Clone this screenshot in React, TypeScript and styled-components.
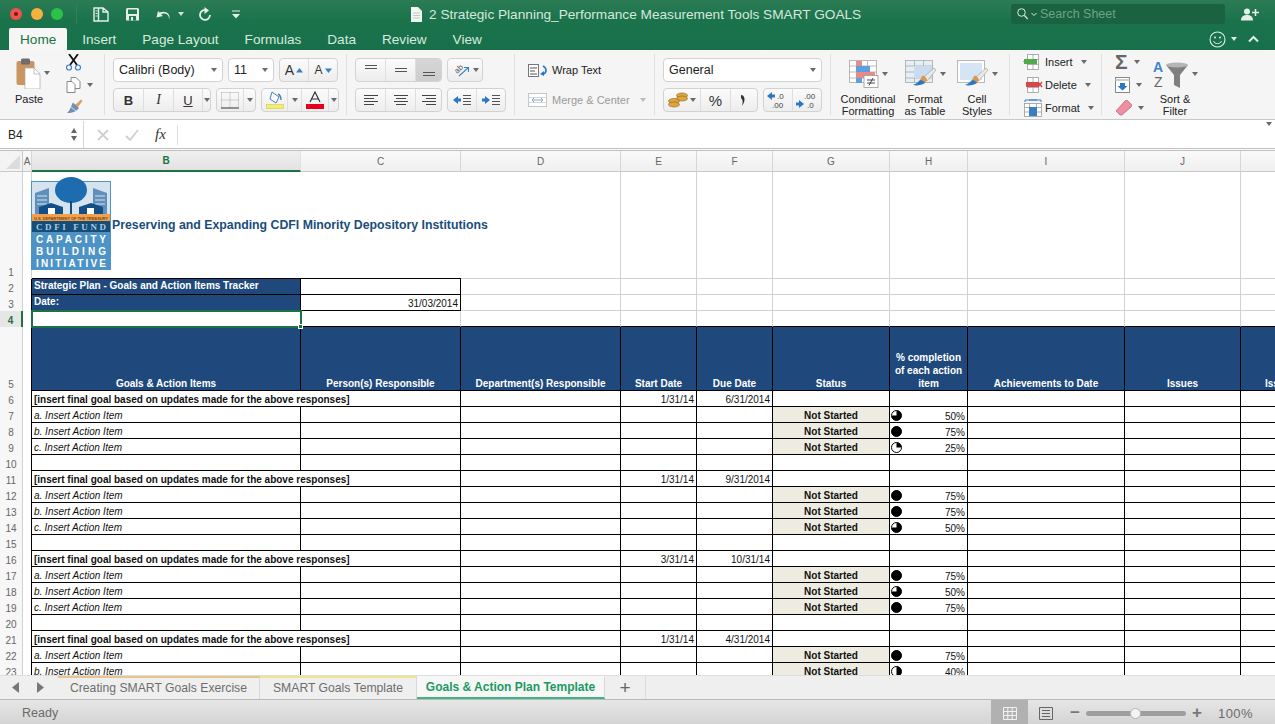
import styled, { createGlobalStyle } from 'styled-components'
import type { ReactNode } from 'react'

const GREEN = '#1e7145'
const NAVY = '#1f497d'
const INK = '#000'
const GRIDLINE = '#d2d2d2'

const Global = createGlobalStyle`
  html, body { margin: 0; padding: 0; height: 100%; overflow: hidden; }
  body { font-family: "Liberation Sans", Arial, sans-serif; color: #222; }
  #root { height: 100%; }
`

const Window = styled.div`
  display: flex;
  flex-direction: column;
  width: 1275px;
  height: 724px;
  overflow: hidden;
  background: #fff;
`

const Header = styled.header`
  flex: none;
  height: 50px;
  background: linear-gradient(#2c7c55, #1b734c 40%, #17704a);
`

const TitleRow = styled.div`
  display: flex;
  align-items: center;
  height: 28px;
`

const Lights = styled.div`
  display: flex;
  align-items: center;
  gap: 8.5px;
  flex: none;
  width: 77px;
  padding-left: 10px;
  box-sizing: border-box;
  border-right: 1px solid #2f8159;
  height: 20px;
`

const Light = styled.span<{ $color: string; $dot?: boolean }>`
  position: relative;
  width: 12px;
  height: 12px;
  border-radius: 50%;
  background: ${({ $color }) => $color};

  &::after {
    content: '';
    display: ${({ $dot }) => ($dot ? 'block' : 'none')};
    position: absolute;
    inset: 4px;
    border-radius: 50%;
    background: #7d1512;
  }
`

const QuickBar = styled.div`
  display: grid;
  grid-template-columns: 32px 30px 43px 33px 12px;
  align-items: center;
  flex: none;
  width: 318px;
  margin-left: 16px;
`

const QuickItem = styled.span`
  display: flex;
  align-items: center;
  gap: 7px;
`

const DocTitle = styled.div`
  flex: 1;
  display: flex;
  align-items: center;
  gap: 7px;
  font-size: 13.65px;
  color: #d5e8dd;
  white-space: nowrap;
`

const Search = styled.div`
  display: flex;
  align-items: center;
  gap: 3px;
  flex: none;
  width: 214px;
  height: 20px;
  margin-right: 16px;
  padding-left: 6px;
  box-sizing: border-box;
  border-radius: 3px;
  background: #1b6240;
  font-size: 12.5px;
  color: #6ba487;
`

const PersonSlot = styled.span`
  display: flex;
  flex: none;
  width: 34px;
`

const TabRow = styled.nav`
  display: flex;
  align-items: stretch;
  gap: 26px;
  height: 22px;
  padding-left: 9px;
  font-size: 13.6px;
`

const RibbonTab = styled.span<{ $active?: boolean }>`
  display: flex;
  align-items: center;
  color: ${({ $active }) => ($active ? GREEN : '#d8eadf')};
  background: ${({ $active }) => ($active ? '#f6f6f6' : 'transparent')};
  padding: ${({ $active }) => ($active ? '0 11px' : '0')};
  margin-right: ${({ $active }) => ($active ? '-11px' : '0')};
  border-radius: 2px 2px 0 0;
`

const HeaderEnd = styled.div`
  display: flex;
  align-items: center;
  gap: 5px;
  margin-left: auto;
  padding-right: 11px;
`

const Ribbon = styled.section`
  flex: none;
  display: flex;
  height: 70px;
  box-sizing: border-box;
  padding: 4px 0;
  background: #f5f5f5;
  border-bottom: 1px solid #c9c9c9;
  font-size: 11px;
  color: #222;
`

const Group = styled.div<{ $w: number; $pad?: number; $last?: boolean }>`
  display: flex;
  flex: none;
  box-sizing: border-box;
  width: ${({ $w }) => $w}px;
  padding-left: ${({ $pad }) => $pad ?? 8}px;
  border-right: ${({ $last }) => ($last ? 'none' : '1px solid #e0e0e0')};
`

const Stack = styled.div`
  display: flex;
  flex-direction: column;
  gap: 6px;
  padding-top: 4px;
`

const Row = styled.div<{ $gap?: number }>`
  display: flex;
  align-items: center;
  gap: ${({ $gap }) => $gap ?? 5}px;
  height: 24px;
`

const Seg = styled.div<{ $w: number }>`
  display: flex;
  flex: none;
  width: ${({ $w }) => $w}px;
  height: 24px;
  box-sizing: border-box;
  overflow: hidden;
  border: 1px solid #d2d2d2;
  border-radius: 4px;
  background: linear-gradient(#fbfbfb, #ededed);
`

const SegCell = styled.span<{ $grow?: boolean; $w?: number; $on?: boolean }>`
  display: flex;
  align-items: center;
  justify-content: center;
  gap: 2px;
  flex: ${({ $grow }) => ($grow ? 1 : 'none')};
  width: ${({ $w }) => ($w ? `${$w}px` : 'auto')};
  background: ${({ $on }) => ($on ? 'linear-gradient(#d6d6d6, #cdcdcd)' : 'transparent')};

  & + & {
    border-left: 1px solid #dedede;
  }
`

const Select = styled.div<{ $w: number }>`
  display: flex;
  align-items: center;
  justify-content: space-between;
  flex: none;
  width: ${({ $w }) => $w}px;
  height: 24px;
  box-sizing: border-box;
  padding: 0 5px;
  background: #fff;
  border: 1px solid #d2d2d2;
  border-radius: 4px;
  font-size: 12.5px;
  color: #222;
`

const Caret = styled.span<{ $tone?: string }>`
  flex: none;
  width: 0;
  height: 0;
  border-left: 3px solid transparent;
  border-right: 3px solid transparent;
  border-top: 4px solid ${({ $tone }) => $tone ?? '#6a6a6a'};
`

const PasteBlock = styled.div`
  display: flex;
  flex-direction: column;
  align-items: center;
  flex: none;
  width: 46px;
  padding-top: 3px;
  gap: 4px;
  margin-left: -2px;
`

const PasteIcon = styled.div`
  display: flex;
  align-items: center;
  gap: 3px;
  margin-left: 8px;
  height: 32px;
`

const ToolColumn = styled.div`
  display: flex;
  flex-direction: column;
  justify-content: space-between;
  margin-left: 14px;
  padding: 0 0 1px;
`

const ToolRow = styled.span`
  display: flex;
  align-items: center;
  gap: 6px;
`

const FaceText = styled.span<{ $bold?: boolean; $italic?: boolean; $under?: boolean; $serif?: boolean; $size?: number; $tone?: string }>`
  font-family: ${({ $serif }) => ($serif ? '"Liberation Serif", serif' : 'inherit')};
  font-weight: ${({ $bold }) => ($bold ? 700 : 400)};
  font-style: ${({ $italic }) => ($italic ? 'italic' : 'normal')};
  text-decoration: ${({ $under }) => ($under ? 'underline' : 'none')};
  font-size: ${({ $size }) => $size ?? 13}px;
  color: ${({ $tone }) => $tone ?? '#333'};
`

const SigmaGlyph = styled(FaceText)`
  line-height: 16px;
`

const WrapRow = styled.div<{ $off?: boolean }>`
  display: flex;
  align-items: center;
  gap: 4px;
  height: 24px;
  color: ${({ $off }) => ($off ? '#9a9a9a' : '#222')};
`

const BigButton = styled.div<{ $w: number }>`
  display: flex;
  flex-direction: column;
  align-items: center;
  flex: none;
  width: ${({ $w }) => $w}px;
  padding-top: 3px;
  line-height: 12px;
  text-align: center;
  white-space: nowrap;
`

const BigIcon = styled.div`
  display: flex;
  align-items: center;
  gap: 3px;
  flex: none;
  height: 34px;
  margin-bottom: 2px;
`

const CellsColumn = styled.div`
  display: flex;
  flex-direction: column;
  gap: 3px;
  margin-top: -2px;
`

const CellsRow = styled.div`
  display: flex;
  align-items: center;
  flex: none;
  gap: 2px;
  height: 20px;
  font-size: 11px;
`

const CellsCaret = styled(Caret)`
  margin-left: 6px;
`

const EditColumn = styled.div`
  display: flex;
  flex-direction: column;
  justify-content: space-between;
  flex: none;
  width: 36px;
  height: 62px;
`

const FormulaBar = styled.div`
  flex: none;
  display: flex;
  align-items: center;
  height: 31px;
  padding-top: 1px;
  box-sizing: border-box;
  background: #fff;
  border-bottom: 3px double #bdbdbd;
`

const NameBox = styled.div`
  display: flex;
  align-items: center;
  justify-content: space-between;
  flex: none;
  width: 84px;
  height: 100%;
  box-sizing: border-box;
  padding: 0 6px 0 8px;
  border-right: 1px solid #d6d6d6;
  font-size: 12px;
`

const Stepper = styled.span`
  display: flex;
  flex-direction: column;
  gap: 3px;
`

const StepUp = styled.span`
  width: 0;
  height: 0;
  border-left: 3.5px solid transparent;
  border-right: 3.5px solid transparent;
  border-bottom: 5px solid #666;
`

const StepDown = styled(StepUp)`
  transform: rotate(180deg);
`

const FormulaTools = styled.div`
  display: flex;
  align-items: center;
  gap: 16px;
  padding-left: 13px;
  width: 94px;
  height: 20px;
  box-sizing: border-box;
  border-right: 1px solid #dedede;
`

const FormulaEnd = styled.div`
  margin-left: auto;
  padding-right: 3px;
`

const SheetArea = styled.main`
  flex: 1;
  min-height: 0;
  overflow: hidden;
  background: #fff;
`

const Sheet = styled.table`
  table-layout: fixed;
  border-collapse: separate;
  border-spacing: 0;
  width: 1321px;
  font-size: 10px;
  color: #111;
`

const ColHead = styled.th<{ $on?: boolean }>`
  height: 21px;
  box-sizing: border-box;
  padding: 0;
  font-weight: ${({ $on }) => ($on ? 700 : 400)};
  font-size: 10px;
  color: ${({ $on }) => ($on ? GREEN : '#666')};
  background: ${({ $on }) => ($on ? 'linear-gradient(#f0f0f0, #e2e2e2)' : 'linear-gradient(#fafafa, #efefef)')};
  border-right: 1px solid ${({ $on }) => ($on ? '#e2e2e2' : '#d6d6d6')};
  border-bottom: ${({ $on }) => ($on ? `2px solid ${GREEN}` : '1px solid #c9c9c9')};
`

const Corner = styled.th`
  position: relative;
  padding: 0;
  background: #f4f4f4;
  border-right: 1px solid #c9c9c9;
  border-bottom: 1px solid #c9c9c9;

  &::after {
    content: '';
    position: absolute;
    right: 2px;
    bottom: 2px;
    border-left: 14px solid transparent;
    border-bottom: 14px solid #dcdcdc;
  }
`

const RowHead = styled.th<{ $on?: boolean }>`
  padding: 0 0 1px;
  box-sizing: border-box;
  vertical-align: bottom;
  font-size: 10px;
  line-height: 11px;
  font-weight: ${({ $on }) => ($on ? 700 : 400)};
  color: ${({ $on }) => ($on ? GREEN : '#666')};
  background: ${({ $on }) => ($on ? '#e6e6e6' : '#f7f7f7')};
  border-right: ${({ $on }) => ($on ? `2px solid ${GREEN}` : '1px solid #cfcfcf')};
`

type Edge = 'grid' | 'ink' | 'none'
const edge = (e: Edge = 'grid') =>
  e === 'none' ? 'none' : `1px solid ${e === 'ink' ? INK : GRIDLINE}`

const Cell = styled.td<{
  $h?: number
  $right?: Edge
  $under?: Edge
  $side?: 'left' | 'center' | 'right'
  $tone?: 'navy' | 'status'
  $bold?: boolean
  $italic?: boolean
}>`
  position: relative;
  box-sizing: border-box;
  height: ${({ $h }) => $h ?? 16}px;
  padding: ${({ $tone }) => ($tone === 'navy' ? '0 2px 2px' : '1px 2px 0')};
  line-height: 11px;
  white-space: nowrap;
  overflow: visible;
  text-align: ${({ $side }) => $side ?? 'left'};
  font-weight: ${({ $bold }) => ($bold ? 700 : 400)};
  font-style: ${({ $italic }) => ($italic ? 'italic' : 'normal')};
  color: ${({ $tone }) => ($tone === 'navy' ? '#fff' : '#111')};
  background: ${({ $tone }) => ($tone === 'navy' ? NAVY : $tone === 'status' ? '#eeece1' : 'transparent')};
  border-right: ${({ $right }) => edge($right)};
  border-bottom: ${({ $under }) => edge($under)};
`

const GapCell = styled(Cell)`
  padding: 0;
  background: #fff;
  border-bottom: none;
`

const BannerCell = styled(Cell)`
  padding: 0 0 0 80px;
  font-size: 12.3px;
  font-weight: 700;
  color: #1a4d7c;
`

const HeaderCell = styled(Cell)`
  vertical-align: bottom;
  padding: 0 2px;
  line-height: 13px;
  white-space: normal;
  text-align: center;
  font-weight: 700;
  color: #fff;
  background: ${NAVY};
  border-right: 1px solid ${INK};
  border-bottom: 1px solid ${INK};
`

const NoWrapLabel = styled.span`
  white-space: nowrap;
`

const SelectedCell = styled(Cell)`
  z-index: 2;
  outline: 2px solid ${GREEN};
  outline-offset: -1px;

  &::after {
    content: '';
    position: absolute;
    right: -3px;
    bottom: -3px;
    width: 5px;
    height: 5px;
    background: ${GREEN};
    border: 1px solid #fff;
    box-sizing: border-box;
  }
`

const Logo = styled.svg`
  position: absolute;
  left: -1px;
  top: 5px;
  z-index: 1;
`

const PctLine = styled.div`
  display: flex;
  align-items: center;
  justify-content: space-between;
  margin-left: -1px;
  margin-right: 0;
`

const PctText = styled.span`
  padding-top: 2px;
`

const SheetTabs = styled.div`
  flex: none;
  display: flex;
  align-items: stretch;
  height: 25px;
  box-sizing: border-box;
  background: #efefef;
  border-top: 1px solid #dedede;
  border-bottom: 1px solid #b9b9b9;
  font-size: 12.2px;
`

const TabArrows = styled.div`
  display: flex;
  align-items: center;
  gap: 16px;
  flex: none;
  width: 58px;
  padding-left: 12px;
  box-sizing: border-box;
`

const SheetTab = styled.div<{ $w: number; $strip?: string; $active?: boolean }>`
  display: flex;
  align-items: center;
  justify-content: center;
  flex: none;
  width: ${({ $w }) => $w}px;
  box-sizing: border-box;
  padding-bottom: 2px;
  font-size: ${({ $active }) => ($active ? '12px' : 'inherit')};
  color: ${({ $active }) => ($active ? '#1b9a63' : '#6e6e6e')};
  font-weight: ${({ $active }) => ($active ? 700 : 400)};
  border-top: 2px solid ${({ $strip }) => $strip ?? 'transparent'};
  border-right: 1px solid #d8d8d8;
  border-bottom: ${({ $active }) => ($active ? '2px solid #3fb585' : 'none')};
  background: ${({ $active }) => ($active ? '#f7f7f7' : 'transparent')};
`

const AddSheet = styled.div`
  display: flex;
  align-items: center;
  justify-content: center;
  flex: none;
  width: 40px;
  font-size: 19px;
  color: #666;
  border-right: 1px solid #dcdcdc;
`

const StatusBar = styled.footer`
  flex: none;
  display: flex;
  align-items: center;
  height: 24px;
  padding-left: 22px;
  background: linear-gradient(#e6e6e6, #d4d4d4);
  font-size: 12.5px;
  color: #6a6a6a;
`

const StatusLabel = styled.span`
  padding-top: 2px;
`

const StatusEnd = styled.div`
  display: flex;
  align-items: center;
  height: 100%;
  box-sizing: border-box;
  margin-left: auto;
  padding-top: 2px;
`

const ViewButton = styled.span<{ $on?: boolean; $w: number }>`
  display: flex;
  align-items: center;
  justify-content: center;
  align-self: stretch;
  margin-top: -2px;
  padding-top: 2px;
  width: ${({ $w }) => $w}px;
  background: ${({ $on }) => ($on ? '#b1b1b1' : 'transparent')};
`

const ZoomSign = styled.span`
  width: 22px;
  text-align: center;
  font-size: 17px;
  font-weight: 700;
  color: #777;
`

const Track = styled.span`
  position: relative;
  width: 100px;
  height: 5px;
  border-radius: 3px;
  background: #9e9e9e;
`

const Knob = styled.span`
  position: absolute;
  left: 44px;
  top: -3px;
  width: 11px;
  height: 11px;
  border-radius: 50%;
  background: #f4f4f4;
  border: 1px solid #b5b5b5;
  box-sizing: border-box;
`

const ZoomLabel = styled.span`
  width: 67px;
  padding-left: 10px;
  box-sizing: border-box;
  font-size: 13px;
  letter-spacing: 0.4px;
`

function Icon({ w, h, children }: { w: number; h: number; children: ReactNode }) {
  return (
    <svg width={w} height={h} viewBox={`0 0 ${w} ${h}`} fill="none">
      {children}
    </svg>
  )
}

const Lines = ({ rows, tone = '#444' }: { rows: [number, number, number][]; tone?: string }) => (
  <Icon w={16} h={12}>
    {rows.map(([x1, x2, y]) => (
      <path key={y} d={`M${x1} ${y + 0.5}H${x2}`} stroke={tone} />
    ))}
  </Icon>
)

const AlignBar = ({ y }: { y: number }) => (
  <Icon w={16} h={16}>
    <path d={`M2 ${y}.5H14M2 ${y + 3}.5H14`} stroke="#555" />
  </Icon>
)

function Harvey({ kind }: { kind: 'full' | 'threeq' | 'half' | 'quarter' }) {
  const wedge = {
    full: 'M5.5 5.5m-5 0a5 5 0 1 0 10 0a5 5 0 1 0-10 0',
    threeq: 'M5.5 5.5V.5A5 5 0 1 1 .5 5.5Z',
    half: 'M5.5.5A5 5 0 0 1 5.5 10.5Z',
    quarter: 'M5.5 5.5V.5A5 5 0 0 1 10.5 5.5Z',
  }[kind]
  return (
    <Icon w={11} h={11}>
      <circle cx={5.5} cy={5.5} r={5} fill="#fff" stroke="#000" />
      <path d={wedge} fill="#000" />
    </Icon>
  )
}

const Brush = ({ x, y }: { x: number; y: number }) => (
  <g transform={`translate(${x} ${y})`}>
    <path d="M11 9 21 0l2 2-9 11Z" fill="#e8e8e8" stroke="#9a9a9a" strokeWidth={0.6} />
    <path d="M9 8c2-1 4 1 5 4l-2 3-5-3Z" fill="#d99a4e" />
    <path d="M7 12c2 0 4 1 5 3-3 2-8 3-12 2 3-1 5-3 7-5Z" fill="#2a78c4" />
  </g>
)

const TableGrid = ({ fill }: { fill: string }) => (
  <g stroke="#a9a9a9" strokeWidth={0.8}>
    <rect x={0.5} y={0.5} width={27} height={22} fill={fill} />
    <path d="M9.5.5v22M18.5.5v22M.5 6h27M.5 12h27M.5 18h27" />
  </g>
)

const CellIcon = ({ fill, tag, mark }: { fill: string; tag: ReactNode; mark?: boolean }) => (
  <Icon w={20} h={18}>
    <g stroke="#9c9c9c" strokeWidth={0.8}>
      <rect x={4.5} y={1.5} width={11} height={15} fill="#fff" />
      <path d="M4.5 6.5h11M4.5 11.5h11M10 1.5v15" />
    </g>
    <rect x={mark ? 1 : 3} y={6} width={13} height={5} fill={fill} />
    {tag}
  </Icon>
)

type Pct = { kind: 'full' | 'threeq' | 'half' | 'quarter'; value: string }
type Line =
  | { type: 'goal'; no: number; start: string; due: string }
  | { type: 'item'; no: number; label: string; pct: Pct }
  | { type: 'blank'; no: number }

const goalText = '[insert final goal based on updates made for the above responses]'
const P50: Pct = { kind: 'threeq', value: '50%' }
const P75: Pct = { kind: 'full', value: '75%' }

const lines: Line[] = [
  { type: 'goal', no: 6, start: '1/31/14', due: '6/31/2014' },
  { type: 'item', no: 7, label: 'a.', pct: P50 },
  { type: 'item', no: 8, label: 'b.', pct: P75 },
  { type: 'item', no: 9, label: 'c.', pct: { kind: 'quarter', value: '25%' } },
  { type: 'blank', no: 10 },
  { type: 'goal', no: 11, start: '1/31/14', due: '9/31/2014' },
  { type: 'item', no: 12, label: 'a.', pct: P75 },
  { type: 'item', no: 13, label: 'b.', pct: P75 },
  { type: 'item', no: 14, label: 'c.', pct: P50 },
  { type: 'blank', no: 15 },
  { type: 'goal', no: 16, start: '3/31/14', due: '10/31/14' },
  { type: 'item', no: 17, label: 'a.', pct: P75 },
  { type: 'item', no: 18, label: 'b.', pct: P50 },
  { type: 'item', no: 19, label: 'c.', pct: P75 },
  { type: 'blank', no: 20 },
  { type: 'goal', no: 21, start: '1/31/14', due: '4/31/2014' },
  { type: 'item', no: 22, label: 'a.', pct: P75 },
  { type: 'item', no: 23, label: 'b.', pct: { kind: 'half', value: '40%' } },
]

const columns = [
  { name: 'A', w: 9 },
  { name: 'B', w: 269 },
  { name: 'C', w: 160 },
  { name: 'D', w: 160 },
  { name: 'E', w: 76 },
  { name: 'F', w: 76 },
  { name: 'G', w: 117 },
  { name: 'H', w: 78 },
  { name: 'I', w: 157 },
  { name: 'J', w: 116 },
  { name: 'K', w: 80 },
]

const Ink = ({ children, ...rest }: { children?: ReactNode; $side?: 'left' | 'center' | 'right'; $bold?: boolean; $italic?: boolean; $tone?: 'navy' | 'status'; colSpan?: number }) => (
  <Cell $right="ink" $under="ink" {...rest}>
    {children}
  </Cell>
)

const headLabels = [
  'Goals & Action Items',
  'Person(s) Responsible',
  'Department(s) Responsible',
  'Start Date',
  'Due Date',
  'Status',
  '% completion of each action item',
  'Achievements to Date',
  'Issues',
  'Issues',
]

function SheetRow({ line }: { line: Line }) {
  const rest = (n: number) => Array.from({ length: n }, (_, i) => <Ink key={i} />)
  return (
    <tr>
      <RowHead>{line.no}</RowHead>
      <GapCell $right="ink" />
      {line.type === 'goal' && (
        <>
          <Ink colSpan={2} $bold>
            {goalText}
          </Ink>
          <Ink />
          <Ink $side="right">{line.start}</Ink>
          <Ink $side="right">{line.due}</Ink>
          {rest(5)}
        </>
      )}
      {line.type === 'item' && (
        <>
          <Ink $italic>{line.label} Insert Action Item</Ink>
          {rest(4)}
          <Ink $tone="status" $side="center" $bold>
            Not Started
          </Ink>
          <Ink>
            <PctLine>
              <Harvey kind={line.pct.kind} />
              <PctText>{line.pct.value}</PctText>
            </PctLine>
          </Ink>
          {rest(3)}
        </>
      )}
      {line.type === 'blank' && rest(10)}
    </tr>
  )
}

function PlainTail({ n }: { n: number }) {
  return (
    <>
      {Array.from({ length: n }, (_, i) => (
        <Cell key={i} />
      ))}
    </>
  )
}

export default function App() {
  return (
    <Window>
      <Global />
      <Header>
        <TitleRow>
          <Lights>
            <Light $color="#f0524f" $dot />
            <Light $color="#f5b13d" />
            <Light $color="#2bc24a" />
          </Lights>
          <QuickBar>
            <QuickItem>
              <Icon w={16} h={15}>
                <path d="M1 1h9l5 4v9H1ZM5.5 1v13M10 1v4h5" stroke="#e3efe8" strokeWidth={1.4} />
                <path d="M2.5 4h2M2.5 6.5h2M2.5 9h2" stroke="#e3efe8" />
              </Icon>
            </QuickItem>
            <QuickItem>
              <Icon w={15} h={15}>
                <path d="M1 2.5A1.5 1.5 0 0 1 2.5 1h10A1.5 1.5 0 0 1 14 2.5v11H1Z" fill="#e3efe8" />
                <rect x={3} y={2.5} width={9} height={4.5} fill="#257a51" />
                <rect x={4} y={9} width={7} height={4.5} fill="#257a51" />
                <rect x={6} y={10} width={2} height={3.5} fill="#e3efe8" />
              </Icon>
            </QuickItem>
            <QuickItem>
              <Icon w={16} h={13}>
                <path d="M3 3 1.5 9.5 8 8 6 6.5C8 5 11 5 13 7.5 14 9 14 10.5 14 11.5 16 7 12 1.5 4.5 4.5Z" fill="#e3efe8" />
              </Icon>
              <Caret $tone="#cfe2d7" />
            </QuickItem>
            <QuickItem>
              <Icon w={14} h={15}>
                <path d="M9 3.3A5 5 0 1 0 12 8" stroke="#e3efe8" strokeWidth={1.8} />
                <path d="M6.5 0 11 3.5 6.5 7Z" fill="#e3efe8" />
              </Icon>
            </QuickItem>
            <QuickItem>
              <Icon w={10} h={9}>
                <path d="M1 1h8" stroke="#e3efe8" />
                <path d="M1 4h8L5 8.5Z" fill="#e3efe8" />
              </Icon>
            </QuickItem>
          </QuickBar>
          <DocTitle>
            <Icon w={11} h={15}>
              <path d="M0 0h7l4 4v11H0Z" fill="#f3f7f4" />
              <path d="M2 6h7M2 8.5h7M2 11h7" stroke="#b7ccc0" />
            </Icon>
            2 Strategic Planning_Performance Measurement Tools SMART GOALS
          </DocTitle>
          <Search>
            <Icon w={11} h={12}>
              <circle cx={4.5} cy={4.5} r={3.8} stroke="#dceee4" />
              <path d="m7.5 7.5 3.2 3.5" stroke="#dceee4" strokeWidth={1.2} />
            </Icon>
            <Icon w={6} h={5}>
              <path d="m.5 1 2.5 2.5L5.5 1" stroke="#dceee4" />
            </Icon>
            Search Sheet
          </Search>
          <PersonSlot>
            <Icon w={18} h={13}>
              <circle cx={6} cy={3.5} r={3} fill="#e3efe8" />
              <path d="M0 12.5c0-4 2.5-5.5 6-5.5s6 1.5 6 5.5Z" fill="#e3efe8" />
              <path d="M14.5 1v7M11 4.5h7" stroke="#e3efe8" strokeWidth={1.6} />
            </Icon>
          </PersonSlot>
        </TitleRow>
        <TabRow>
          <RibbonTab $active>Home</RibbonTab>
          <RibbonTab>Insert</RibbonTab>
          <RibbonTab>Page Layout</RibbonTab>
          <RibbonTab>Formulas</RibbonTab>
          <RibbonTab>Data</RibbonTab>
          <RibbonTab>Review</RibbonTab>
          <RibbonTab>View</RibbonTab>
          <HeaderEnd>
            <Icon w={17} h={17}>
              <circle cx={8.5} cy={8.5} r={7.5} stroke="#dceee4" strokeWidth={1.1} />
              <circle cx={6} cy={6.5} r={1} fill="#dceee4" />
              <circle cx={11} cy={6.5} r={1} fill="#dceee4" />
              <path d="M4.5 10c1 3.5 7 3.5 8 0" stroke="#dceee4" />
            </Icon>
            <Caret $tone="#dceee4" />
            <Icon w={22} h={8}>
              <path d="m7 6.5 4.5-4.500L16 6.500" stroke="#e3efe8" strokeWidth={2} />
            </Icon>
          </HeaderEnd>
        </TabRow>
      </Header>

      <Ribbon>
        <Group $w={105} $pad={8}>
          <PasteBlock>
            <PasteIcon>
              <Icon w={25} h={31}>
                <rect x={0.5} y={3} width={18} height={24} rx={2} fill="#c99561" />
                <rect x={5} y={0.5} width={9} height={6} rx={1.5} fill="#6d6d6d" />
                <path d="M9 10h9l6 6v15H9Z" fill="#fff" stroke="#aaa" strokeWidth={0.7} />
                <path d="M18 10v6h6" stroke="#aaa" strokeWidth={0.7} />
              </Icon>
              <Caret />
            </PasteIcon>
            Paste
          </PasteBlock>
          <ToolColumn>
            <ToolRow>
              <Icon w={15} h={17}>
                <path d="M3 0 11 11M12 0 4 11" stroke="#111" strokeWidth={1.8} />
                <circle cx={3} cy={13.5} r={2.5} stroke="#3a7fc4" strokeWidth={1.2} />
                <circle cx={12} cy={13.5} r={2.5} stroke="#3a7fc4" strokeWidth={1.2} />
              </Icon>
            </ToolRow>
            <ToolRow>
              <Icon w={15} h={16}>
                <path d="M5 .5h5l4 4v7H5Z" fill="#fff" stroke="#888" />
                <path d="M1 4.5h5l3 3v8H1Z" fill="#fff" stroke="#888" />
              </Icon>
              <Caret />
            </ToolRow>
            <ToolRow>
              <Icon w={17} h={15}>
                <path d="M9 6 15 .5l1.5 1.5L12 8Z" fill="#d8a066" />
                <path d="M7 3.5 13 9c-2 3-6 5-12 5 3-2 4-7 6-10.500Z" fill="#6f91b8" />
                <path d="M5 8 10 12" stroke="#fff" strokeWidth={0.7} />
              </Icon>
            </ToolRow>
          </ToolColumn>
        </Group>

        <Group $w={242}>
          <Stack>
            <Row>
              <Select $w={110}>
                Calibri (Body)
                <Caret />
              </Select>
              <Select $w={46}>
                11
                <Caret />
              </Select>
              <Seg $w={59}>
                <SegCell $grow>
                  <FaceText $size={14}>A</FaceText>
                  <Icon w={7} h={5}><path d="M0 4.500 3.500 0 7 4.500Z" fill="#3a7fc4" /></Icon>
                </SegCell>
                <SegCell $grow>
                  <FaceText $size={12}>A</FaceText>
                  <Icon w={7} h={5}><path d="M0 .5 3.500 5 7 .5Z" fill="#3a7fc4" /></Icon>
                </SegCell>
              </Seg>
            </Row>
            <Row>
              <Seg $w={98}>
                <SegCell $w={29}><FaceText $bold>B</FaceText></SegCell>
                <SegCell $w={29}><FaceText $italic $serif $size={14}>I</FaceText></SegCell>
                <SegCell $w={28}><FaceText $under>U</FaceText></SegCell>
                <SegCell $grow><Caret /></SegCell>
              </Seg>
              <Seg $w={40}>
                <SegCell $w={26}>
                  <Icon w={18} h={17}>
                    <path d="M.5.5h17v15M.5.5v15M9 .5v15M.5 8h17" stroke="#aaa" strokeDasharray="1 1" />
                    <path d="M0 16h18" stroke="#333" />
                  </Icon>
                </SegCell>
                <SegCell $grow><Caret /></SegCell>
              </Seg>
              <Seg $w={78}>
                <SegCell $w={25}>
                  <Icon w={18} h={18}>
                    <path d="M6 1 13 6l-3 6-6-4Z" fill="#fff" stroke="#4a7fb5" />
                    <path d="M12 3c2 1 3 3 3 6" stroke="#4a7fb5" strokeWidth={1.4} />
                    <rect x={0.5} y={13.5} width={17} height={4} fill="#f4ef6a" stroke="#d2c94f" strokeWidth={0.6} />
                  </Icon>
                </SegCell>
                <SegCell $w={13}><Caret /></SegCell>
                <SegCell $w={26}>
                  <Icon w={18} h={18}>
                    <path d="m4 11 5-10 5 10M6 8h6" stroke="#333" strokeWidth={1.2} />
                    <rect y={13} width={18} height={5} fill="#e3001b" />
                  </Icon>
                </SegCell>
                <SegCell $grow><Caret /></SegCell>
              </Seg>
            </Row>
          </Stack>
        </Group>

        <Group $w={168}>
          <Stack>
            <Row>
              <Seg $w={87}>
                <SegCell $w={29}><AlignBar y={3} /></SegCell>
                <SegCell $w={29}><AlignBar y={6} /></SegCell>
                <SegCell $grow $on><AlignBar y={10} /></SegCell>
              </Seg>
              <Seg $w={36}>
                <SegCell $grow>
                  <Icon w={20} h={18}>
                    <text x={3} y={11} fontSize={8} fill="#555" transform="rotate(-45 7 8)" fontFamily="Liberation Sans">ab</text>
                    <path d="M8 15 17 7M13 6.500h4.500V11" stroke="#3a7fc4" strokeWidth={1.1} />
                  </Icon>
                  <Caret />
                </SegCell>
              </Seg>
            </Row>
            <Row>
              <Seg $w={87}>
                <SegCell $w={29}>
                  <Lines rows={[[1, 15, 1], [1, 11, 4], [1, 15, 7], [1, 11, 10]]} />
                </SegCell>
                <SegCell $w={29}>
                  <Lines rows={[[1, 15, 1], [3, 13, 4], [1, 15, 7], [3, 13, 10]]} />
                </SegCell>
                <SegCell $grow>
                  <Lines rows={[[1, 15, 1], [5, 15, 4], [1, 15, 7], [5, 15, 10]]} />
                </SegCell>
              </Seg>
              <Seg $w={59}>
                <SegCell $grow>
                  <Icon w={18} h={12}>
                    <path d="M0 6 5 2v2.500h3v3H5V10Z" fill="#2a78c4" />
                    <path d="M10 1.500h8M10 4.500h8M10 7.500h8M10 10.500h8" stroke="#555" />
                  </Icon>
                </SegCell>
                <SegCell $grow>
                  <Icon w={18} h={12}>
                    <path d="M8 6 3 2v2.500H0v3h3V10Z" fill="#2a78c4" />
                    <path d="M10 1.500h8M10 4.500h8M10 7.500h8M10 10.500h8" stroke="#555" />
                  </Icon>
                </SegCell>
              </Seg>
            </Row>
          </Stack>
        </Group>

        <Group $w={140} $pad={13}>
          <Stack>
            <WrapRow>
              <Icon w={20} h={14}>
                <rect x={0.5} y={1.5} width={10} height={12} fill="#fff" stroke="#777" />
                <path d="M2 5h7M2 8h5M2 11h7" stroke="#555" />
                <path d="M15 3c4 2 4 7 0 8" stroke="#2a78c4" strokeWidth={1.6} />
                <path d="m12 11 4-3v5Z" fill="#2a78c4" />
              </Icon>
              Wrap Text
            </WrapRow>
            <WrapRow $off>
              <Icon w={20} h={14}>
                <rect x={0.5} y={0.5} width={18} height={13} fill="#fff" stroke="#c5c5c5" />
                <path d="M.5 4.500h18M.5 9.500h18" stroke="#d5d5d5" />
                <path d="M4 7h11M4 7l2-2M4 7l2 2M15 7l-2-2M15 7l-2 2" stroke="#86aacb" />
              </Icon>
              <span>Merge &amp; Center</span>
              <CellsCaret $tone="#bbb" />
            </WrapRow>
          </Stack>
        </Group>

        <Group $w={176}>
          <Stack>
            <Row>
              <Select $w={159}>
                General
                <Caret />
              </Select>
            </Row>
            <Row>
              <Seg $w={95}>
                <SegCell $w={36}>
                  <Icon w={20} h={16}>
                    <ellipse cx={14} cy={3.500} rx={5.500} ry={2.500} fill="#e0a63c" stroke="#8a6420" strokeWidth={0.6} />
                    <ellipse cx={14} cy={6.500} rx={5.500} ry={2.500} fill="#e0a63c" stroke="#8a6420" strokeWidth={0.6} />
                    <ellipse cx={6} cy={9} rx={5.500} ry={2.500} fill="#e0a63c" stroke="#8a6420" strokeWidth={0.6} />
                    <ellipse cx={6} cy={12.500} rx={5.500} ry={2.500} fill="#e0a63c" stroke="#8a6420" strokeWidth={0.6} />
                  </Icon>
                  <Caret />
                </SegCell>
                <SegCell $w={29}><FaceText $size={15}>%</FaceText></SegCell>
                <SegCell $grow>
                  <Icon w={8} h={13}>
                    <path d="M1 1c4 0 5 6 1 11 1-4 1-6-1-8Z" fill="#333" />
                  </Icon>
                </SegCell>
              </Seg>
              <Seg $w={59}>
                <SegCell $grow>
                  <Icon w={24} h={18}>
                    <path d="M1 5 6 1v2.500h3v3H6V9Z" fill="#2a78c4" />
                    <text x={11} y={8} fontSize={8} fill="#444" fontFamily="Liberation Sans">.0</text>
                    <text x={6} y={17} fontSize={8} fill="#444" fontFamily="Liberation Sans">.00</text>
                  </Icon>
                </SegCell>
                <SegCell $grow>
                  <Icon w={24} h={18}>
                    <text x={9} y={8} fontSize={8} fill="#444" fontFamily="Liberation Sans">.00</text>
                    <path d="M9 13 4 9v2.500H1v3h3V17Z" fill="#2a78c4" />
                    <text x={12} y={17} fontSize={8} fill="#444" fontFamily="Liberation Sans">.0</text>
                  </Icon>
                </SegCell>
              </Seg>
            </Row>
          </Stack>
        </Group>

        <Group $w={179}>
          <BigButton $w={58}>
            <BigIcon>
              <Icon w={30} h={28}>
                <TableGrid fill="#fff" />
                <rect x={7} y={1} width={6} height={5} fill="#e78a8a" />
                <rect x={7} y={6} width={14} height={6} fill="#5e9fe0" />
                <rect x={7} y={12} width={19} height={6} fill="#e78a8a" />
                <rect x={7} y={18} width={6} height={5} fill="#5e9fe0" />
                <rect x={15} y={15.500} width={14} height={12} fill="#fff" stroke="#999" strokeWidth={0.8} />
                <path d="M18 20h8M18 23h8M20 25.500 24 18" stroke="#333" strokeWidth={0.9} />
              </Icon>
              <Caret />
            </BigIcon>
            Conditional
            <br />
            Formatting
          </BigButton>
          <BigButton $w={56}>
            <BigIcon>
              <Icon w={32} h={28}>
                <TableGrid fill="#e6eef7" />
                <rect x={9} y={6} width={18} height={12} fill="#c9dcf1" />
                <Brush x={8} y={8} />
              </Icon>
              <Caret />
            </BigIcon>
            Format
            <br />
            as Table
          </BigButton>
          <BigButton $w={48}>
            <BigIcon>
              <Icon w={32} h={28}>
                <rect x={0.500} y={0.500} width={27} height={22} fill="#fff" stroke="#a9a9a9" strokeWidth={0.8} />
                <rect x={3} y={3} width={22} height={17} fill="#d5e5f6" />
                <Brush x={8} y={8} />
              </Icon>
              <Caret />
            </BigIcon>
            Cell
            <br />
            Styles
          </BigButton>
        </Group>

        <Group $w={92} $pad={13}>
          <CellsColumn>
            <CellsRow>
              <CellIcon
                fill="#4faa4c"
                mark
                tag={<path d="M0 8.500 5 5v7Z" fill="#4faa4c" />}
              />
              Insert
              <CellsCaret />
            </CellsRow>
            <CellsRow>
              <CellIcon
                fill="#d9434a"
                tag={<path d="m15 6 4 5M19 6l-4 5" stroke="#d9434a" strokeWidth={1.4} />}
              />
              Delete
              <CellsCaret />
            </CellsRow>
            <CellsRow>
              <Icon w={20} h={18}>
                <path d="M2 1h16M2 1v2M18 1v2M6 1h8" stroke="#3a7fc4" />
                <g stroke="#9c9c9c" strokeWidth={0.8}>
                  <rect x={1.500} y={4.500} width={17} height={13} fill="#fff" />
                  <path d="M6.500 4.500v13M13.500 4.500v13M1.500 8.500h17M1.500 13h17" />
                </g>
                <rect x={6} y={8} width={8} height={9} fill="#3a7fc4" />
              </Icon>
              Format
              <CellsCaret />
            </CellsRow>
          </CellsColumn>
        </Group>

        <Group $w={173} $pad={13} $last>
          <EditColumn>
            <ToolRow>
              <SigmaGlyph $bold $size={21} $tone="#666">Σ</SigmaGlyph>
              <Caret />
            </ToolRow>
            <ToolRow>
              <Icon w={15} h={16}>
                <rect x={0.500} y={0.500} width={14} height={15} fill="#fff" stroke="#888" />
                <path d="M0 3h15" stroke="#bbb" strokeWidth={1.5} />
                <path d="M5 6h5v3h2.500l-5 4.500-5-4.500H5Z" fill="#2a78c4" />
              </Icon>
              <Caret />
            </ToolRow>
            <ToolRow>
              <Icon w={17} h={16}>
                <path d="M1 11 10 1c1-1 2-1 3 0l3 3c1 1 1 2 0 3l-9 8H5Z" fill="#ec8fa0" stroke="#b45d70" strokeWidth={0.7} />
              </Icon>
              <Caret />
            </ToolRow>
          </EditColumn>
          <BigButton $w={48}>
            <BigIcon>
              <Icon w={36} h={30}>
                <text x={0} y={13} fontSize={14} fontWeight={700} fill="#3a85d0" fontFamily="Liberation Sans">A</text>
                <text x={1} y={28} fontSize={14} fill="#666" fontFamily="Liberation Sans">Z</text>
                <path d="M13 6h22l-8 10v13l-6-3V16Z" fill="#7f7f7f" />
                <ellipse cx={24} cy={6} rx={11} ry={2.500} fill="#b5b5b5" />
              </Icon>
              <Caret />
            </BigIcon>
            Sort &amp;
            <br />
            Filter
          </BigButton>
        </Group>
      </Ribbon>

      <FormulaBar>
        <NameBox>
          B4
          <Stepper>
            <StepUp />
            <StepDown />
          </Stepper>
        </NameBox>
        <FormulaTools>
          <Icon w={12} h={12}>
            <path d="m1 1 10 10M11 1 1 11" stroke="#cfcfcf" strokeWidth={1.8} />
          </Icon>
          <Icon w={14} h={12}>
            <path d="m1 7 4 4 8-10" stroke="#cfcfcf" strokeWidth={1.8} />
          </Icon>
          <FaceText $italic $serif $size={15}>fx</FaceText>
        </FormulaTools>
        <FormulaEnd>
          <Caret />
        </FormulaEnd>
      </FormulaBar>

      <SheetArea>
        <Sheet>
          <colgroup>
            <col width={23} />
            {columns.map(c => (
              <col key={c.name} width={c.w} />
            ))}
          </colgroup>
          <thead>
            <tr>
              <Corner />
              {columns.map(c => (
                <ColHead key={c.name} $on={c.name === 'B'}>
                  {c.name}
                </ColHead>
              ))}
            </tr>
          </thead>
          <tbody>
            <tr>
              <RowHead>1</RowHead>
              <GapCell />
              <BannerCell $h={107} colSpan={2} $right="none" $under="ink">
                <Logo width={80} height={94} viewBox="0 0 80 94">
                  <rect y={4} width={80} height={89} fill="#4d93c6" />
                  <rect x={1} y={5} width={78} height={32} fill="#d5e3ee" />
                  <path d="M4 37V16l14-5v26ZM62 37V11l14 5v21Z" fill="#5f8fbb" />
                  <path d="M6 19h10M6 23h10M6 27h10M64 19h10M64 23h10M64 27h10" stroke="#d5e3ee" />
                  <ellipse cx={40} cy={13} rx={16} ry={13} fill="#1d6cb0" />
                  <path d="M39 24h2v13h-2Z" fill="#0f4d84" />
                  <path d="M8 37v-7l12-4 12 4v7ZM48 37v-7l12-4 12 4v7Z" fill="#134f87" />
                  <rect x={17} y={31} width={7} height={6} fill="#fff" />
                  <rect x={56} y={31} width={7} height={6} fill="#fff" />
                  <rect x={1} y={37} width={78} height={7} fill="#f2a04e" />
                  <text x={40} y={42.500} textAnchor="middle" fontSize={4} fontWeight={700} fill="#7a4a14" fontFamily="Liberation Sans" textLength={74}>U.S. DEPARTMENT OF THE TREASURY</text>
                  <rect x={1} y={44} width={78} height={11} fill="#154e78" />
                  <text x={40} y={53} textAnchor="middle" fontSize={9} fill="#a9cbe3" fontFamily="Liberation Serif" textLength={70}>CDFI FUND</text>
                  <g fontSize={10} fontWeight={700} fill="#fff" fontFamily="Liberation Sans" textAnchor="middle">
                    <text x={40} y={66} textLength={70}>CAPACITY</text>
                    <text x={40} y={78} textLength={70}>BUILDING</text>
                    <text x={40} y={90} textLength={70}>INITIATIVE</text>
                  </g>
                </Logo>
                Preserving and Expanding CDFI Minority Depository Institutions
              </BannerCell>
              <Cell />
              <PlainTail n={7} />
            </tr>
            <tr>
              <RowHead>2</RowHead>
              <GapCell $right="ink" />
              <Cell $tone="navy" $bold $right="ink" $under="ink">
                Strategic Plan - Goals and Action Items Tracker
              </Cell>
              <Ink />
              <PlainTail n={8} />
            </tr>
            <tr>
              <RowHead>3</RowHead>
              <GapCell $right="ink" />
              <Cell $tone="navy" $bold $right="ink" $under="ink">
                Date:
              </Cell>
              <Ink $side="right">31/03/2014</Ink>
              <PlainTail n={8} />
            </tr>
            <tr>
              <RowHead $on>4</RowHead>
              <GapCell />
              <SelectedCell $right="ink" $under="ink" />
              <Cell $under="ink" />
              {Array.from({ length: 8 }, (_, i) => (
                <Cell key={i} $under="ink" />
              ))}
            </tr>
            <tr>
              <RowHead>5</RowHead>
              <GapCell $right="ink" />
              {headLabels.map((label, i) => (
                <HeaderCell key={i} $h={64}>
                  {label.length > 28 ? label : <NoWrapLabel>{label}</NoWrapLabel>}
                </HeaderCell>
              ))}
            </tr>
            {lines.map(line => (
              <SheetRow key={line.no} line={line} />
            ))}
          </tbody>
        </Sheet>
      </SheetArea>

      <SheetTabs>
        <TabArrows>
          <Icon w={8} h={11}><path d="M7 0v11L0 5.500Z" fill="#777" /></Icon>
          <Icon w={8} h={11}><path d="M1 0v11l7-5.500Z" fill="#777" /></Icon>
        </TabArrows>
        <SheetTab $w={202} $strip="#e8c48e">Creating SMART Goals Exercise</SheetTab>
        <SheetTab $w={157} $strip="#eee68f">SMART Goals Template</SheetTab>
        <SheetTab $w={188} $active>Goals &amp; Action Plan Template</SheetTab>
        <AddSheet>+</AddSheet>
      </SheetTabs>

      <StatusBar>
        <StatusLabel>Ready</StatusLabel>
        <StatusEnd>
          <ViewButton $on $w={37}>
            <Icon w={14} h={13}>
              <path d="M.5.5h13v12H.5ZM.5 4.500h13M.5 8.500h13M4.800.5v12M9.200.5v12" stroke="#f1f1f1" />
            </Icon>
          </ViewButton>
          <ViewButton $w={36}>
            <Icon w={14} h={13}>
              <path d="M.5.5h13v12H.5Z" stroke="#666" />
              <path d="M3 3.500h8M3 6.500h8M3 9.500h8" stroke="#666" />
            </Icon>
          </ViewButton>
          <ZoomSign>−</ZoomSign>
          <Track>
            <Knob />
          </Track>
          <ZoomSign>+</ZoomSign>
          <ZoomLabel>100%</ZoomLabel>
        </StatusEnd>
      </StatusBar>
    </Window>
  )
}
